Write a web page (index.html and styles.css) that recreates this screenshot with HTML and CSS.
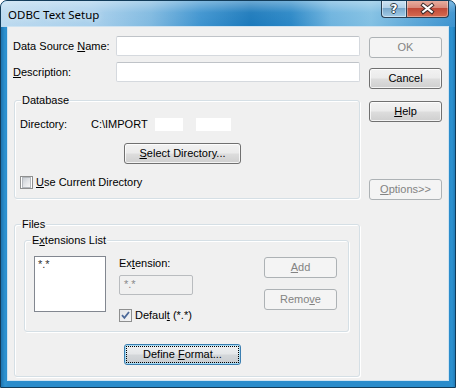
FILE: index.html
```html
<!DOCTYPE html>
<html>
<head>
<meta charset="utf-8">
<title>ODBC Text Setup</title>
<link rel="stylesheet" href="styles.css">
</head>
<body>
<div class="window">
  <div class="titlebar">
    <span class="title">ODBC Text Setup</span>
    <div class="caption-btns">
      <div class="cbtn cbtn-help"><span class="qmark">?</span></div>
      <div class="cbtn cbtn-close">
        <svg width="43" height="18" viewBox="0 0 43 18">
          <path d="M17 5 L26 12 M26 5 L17 12" stroke="#3a2a2a" stroke-width="4.2" stroke-linecap="square" fill="none"/>
          <path d="M17 5 L26 12 M26 5 L17 12" stroke="#ffffff" stroke-width="2.2" stroke-linecap="square" fill="none"/>
        </svg>
      </div>
    </div>
  </div>
  <div class="client">
    <div class="main">
      <div class="row row-dsn">
        <span class="row-label">Data Source <u>N</u>ame:</span>
        <div class="edit"></div>
      </div>
      <div class="row row-desc">
        <span class="row-label"><u>D</u>escription:</span>
        <div class="edit"></div>
      </div>

      <div class="group group-db">
        <span class="group-label">Database</span>
        <div class="dir-row">
          <span class="dir-label">Directory:</span>
          <span class="dir-value">C:\IMPORT</span>
          <span class="blank blank-1"></span>
          <span class="blank blank-2"></span>
        </div>
        <button class="btn btn-wide btn-select"><span class="btn-text"><u>S</u>elect Directory...</span></button>
        <div class="check-row check-row-db">
          <span class="check"></span>
          <span class="check-text"><u>U</u>se Current Directory</span>
        </div>
      </div>

      <div class="group group-files">
        <span class="group-label">Files</span>
        <div class="group group-ext">
          <span class="group-label">E<u>x</u>tensions List</span>
          <div class="ext-body">
            <div class="listbox"><span class="list-item">*.*</span></div>
            <div class="ext-mid">
              <span class="ext-label">Ex<u>t</u>ension:</span>
              <div class="edit edit-disabled"><span class="edit-text">*.*</span></div>
              <div class="check-row">
                <span class="check checked">
                  <svg width="9" height="9" viewBox="0 0 9 9"><path d="M1 4.2 L3.4 6.8 L8 1" stroke="#4d6a9a" stroke-width="1.8" fill="none"/></svg>
                </span>
                <span class="check-text">Defaul<u>t</u> (*.*)</span>
              </div>
            </div>
            <div class="ext-btns">
              <button class="btn btn-disabled btn-add"><span class="btn-text"><u>A</u>dd</span></button>
              <button class="btn btn-disabled btn-remove"><span class="btn-text">Remo<u>v</u>e</span></button>
            </div>
          </div>
        </div>
        <button class="btn btn-wide btn-focus btn-define"><span class="focus-ring">Define <u>F</u>ormat...</span></button>
      </div>
    </div>

    <div class="side">
      <button class="btn btn-disabled btn-ok"><span class="btn-text">OK</span></button>
      <button class="btn btn-cancel"><span class="btn-text">Cancel</span></button>
      <button class="btn btn-help"><span class="btn-text"><u>H</u>elp</span></button>
      <button class="btn btn-disabled btn-options"><span class="btn-text"><u>O</u>ptions&gt;&gt;</span></button>
    </div>
  </div>
</div>
</body>
</html>
```
FILE: styles.css
```css
* { box-sizing: border-box; }
html, body { margin: 0; padding: 0; background: #ffffff; }
body {
  font-family: "Liberation Sans", Arial, sans-serif;
  font-size: 11px;
  color: #000;
}
u { text-decoration: underline; text-underline-offset: 1px; }

.window {
  width: 456px;
  height: 388px;
  border: 1px solid #123c5a;
  border-radius: 7px 7px 0 0;
  background: linear-gradient(90deg, #1d74b0 0, #2d92d0 4px, #2a8ccb 7px, #2a8ccb 448px, #2d92d0 451px, #1d74b0 455px);
  display: flex;
  flex-direction: column;
  overflow: hidden;
}

.titlebar {
  height: 26px;
  flex: none;
  display: flex;
  align-items: flex-start;
  justify-content: space-between;
  padding: 0 6px 0 7px;
  background:
    linear-gradient(180deg, rgba(255,255,255,0.35) 0, rgba(255,255,255,0.05) 45%, rgba(0,0,0,0) 100%),
    linear-gradient(90deg, #bcdaef 0, #a9d0ec 90px, #7fb9e0 150px, #3d93cf 200px, #1b79bb 250px, #2a87c6 290px, #6db3de 330px, #82c0e3 370px, #5ea8d8 410px, #3b92cf 455px);
}
.title {
  font-family: "Noto Sans", "Liberation Sans", sans-serif;
  font-size: 11.5px;
  line-height: 16px;
  margin-top: 6px;
  color: #000;
  text-shadow: 0 0 6px rgba(255,255,255,0.7);
}
.caption-btns {
  display: flex;
  margin-top: -1px;
}
.cbtn {
  height: 18px;
  border: 1px solid #2a3f52;
  border-top: none;
  display: flex;
  align-items: center;
  justify-content: center;
}
.cbtn-help {
  width: 25px;
  border-right: none;
  border-radius: 0 0 0 4px;
  background: linear-gradient(180deg, #d2e6f4 0%, #b1d0e8 45%, #7aa9cc 50%, #a3cbe6 100%);
  box-shadow: inset 0 0 0 1px rgba(255,255,255,0.45);
}
.qmark {
  font-family: "DejaVu Sans", sans-serif;
  font-weight: bold;
  font-size: 12px;
  line-height: 12px;
  color: #fff;
  text-shadow: 1px 0 0 #2d3b48, -1px 0 0 #2d3b48, 0 1px 0 #2d3b48, 0 -1px 0 #2d3b48;
}
.cbtn-close {
  width: 43px;
  border-radius: 0 0 4px 0;
  background: linear-gradient(180deg, #eab2a4 0%, #d98a7b 45%, #c24a38 50%, #d66b50 100%);
  box-shadow: inset 0 0 0 1px rgba(255,255,255,0.35);
}
.cbtn-close svg { display: block; }

.client {
  margin: 0 7px 7px 7px;
  height: 353px;
  background: #f0f0f0;
  box-shadow: 0 0 0 1px #cfe3f1;
  display: flex;
  padding-left: 5px;
  gap: 9px;
}

.main {
  width: 347px;
  display: flex;
  flex-direction: column;
  align-items: flex-start;
}

.row { display: flex; align-items: center; height: 20px; }
.row-dsn { margin-top: 9px; }
.row-desc { margin-top: 6px; }
.row-label { width: 103px; line-height: 13px; }

.edit {
  width: 244px;
  height: 20px;
  background: #fff;
  border: 1px solid #d5d9de;
  border-top-color: #bfc3c8;
  border-radius: 2px;
}
.edit-disabled {
  width: 74px;
  background: #f0f0f0;
  border-color: #b9bcbf;
  padding: 2px 0 0 4px;
}
.edit-text { color: #8a8a8a; line-height: 13px; }

.group {
  border: 1px solid #d5dfe5;
  border-radius: 3px;
  box-shadow: inset 1px 1px 0 #fff, 1px 1px 0 #fff;
  display: flex;
  flex-direction: column;
  align-items: flex-start;
}
.group-label {
  display: block;
  margin: -7px 0 0 6px;
  padding: 0 1px;
  line-height: 13px;
  background: #f0f0f0;
}
.group-db {
  margin: 18px 0 0 1px;
  width: 346px;
  height: 99px;
}
.dir-row {
  display: flex;
  align-items: center;
  height: 13px;
  margin: 11px 0 0 5px;
}
.dir-label { width: 71px; line-height: 13px; }
.dir-value { width: 64px; line-height: 13px; }
.blank { height: 13px; background: #fff; }
.blank-1 { width: 28px; }
.blank-2 { width: 35px; margin-left: 13px; }

.btn {
  font-family: "Liberation Sans", Arial, sans-serif;
  font-size: 11px;
  color: #000;
  width: 73px;
  height: 21px;
  padding: 0;
  border: 1px solid #707070;
  border-radius: 3px;
  background: linear-gradient(180deg, #f2f2f2 0%, #ebebeb 48%, #dddddd 52%, #cfcfcf 100%);
  box-shadow: inset 0 0 0 1px rgba(255,255,255,0.75);
  display: flex;
  align-items: center;
  justify-content: center;
  flex: none;
}
.btn-text {
  display: block;
  line-height: 13px;
  white-space: pre;
}
.btn-wide { width: 117px; }
.btn-disabled {
  border-color: #adb2b5;
  background: #f4f4f4;
  color: #838383;
  box-shadow: none;
}
.btn-select { margin: 12px 0 0 109px; }
.btn-focus {
  border-color: #3c7fb1;
  box-shadow: inset 0 0 0 1px #a6dcf6;
  background: linear-gradient(180deg, #eef0f2 0%, #e4e6e8 48%, #d4d7da 52%, #c8ccd0 100%);
}
.focus-ring {
  display: block;
  width: 113px;
  height: 17px;
  border: 1px dotted #000;
  line-height: 15px;
  text-align: center;
  white-space: pre;
}
.btn-define { margin: 12px 0 0 109px; }

.check-row {
  display: flex;
  align-items: center;
  height: 13px;
}
.check-row-db { margin: 12px 0 0 5px; }
.check {
  width: 13px;
  height: 13px;
  flex: none;
  border: 1px solid #8e8f8f;
  background: #fff;
  padding: 1px;
  display: flex;
  align-items: center;
  justify-content: center;
}
.check::before {
  content: "";
  display: block;
  width: 9px;
  height: 9px;
  border: 1px solid #b4b8bd;
  background: linear-gradient(135deg, #c9ced3 0%, #e2e4e7 50%, #f6f6f6 100%);
}
.check.checked::before { display: none; }
.check.checked {
  background: linear-gradient(135deg, #e4e6e9 0%, #f4f4f5 100%);
}
.check svg { display: block; }
.check-text { margin-left: 3px; line-height: 13px; }

.group-files {
  margin: 25px 0 0 1px;
  width: 346px;
  height: 153px;
}
.group-ext {
  margin: 9px 0 0 9px;
  width: 325px;
  height: 92px;
}
.ext-body {
  display: flex;
  align-items: flex-start;
  margin-top: 9px;
  padding-left: 9px;
}
.listbox {
  width: 72px;
  height: 56px;
  background: #fff;
  border: 1px solid #828790;
  padding: 1px 3px;
}
.list-item { line-height: 13px; color: #333; }
.ext-mid {
  margin-left: 13px;
  display: flex;
  flex-direction: column;
  align-items: flex-start;
}
.ext-label { line-height: 13px; margin-top: 1px; }
.ext-mid .edit { margin-top: 5px; }
.ext-mid .check-row { margin-top: 14px; }
.ext-btns {
  margin-left: 71px;
  display: flex;
  flex-direction: column;
}
.btn-add { margin-top: 1px; }
.btn-remove { margin-top: 11px; }

.side {
  width: 73px;
  display: flex;
  flex-direction: column;
}
.btn-ok { margin-top: 10px; }
.btn-cancel { margin-top: 10px; }
.btn-help { margin-top: 12px; }
.btn-options { margin-top: 57px; }
```
